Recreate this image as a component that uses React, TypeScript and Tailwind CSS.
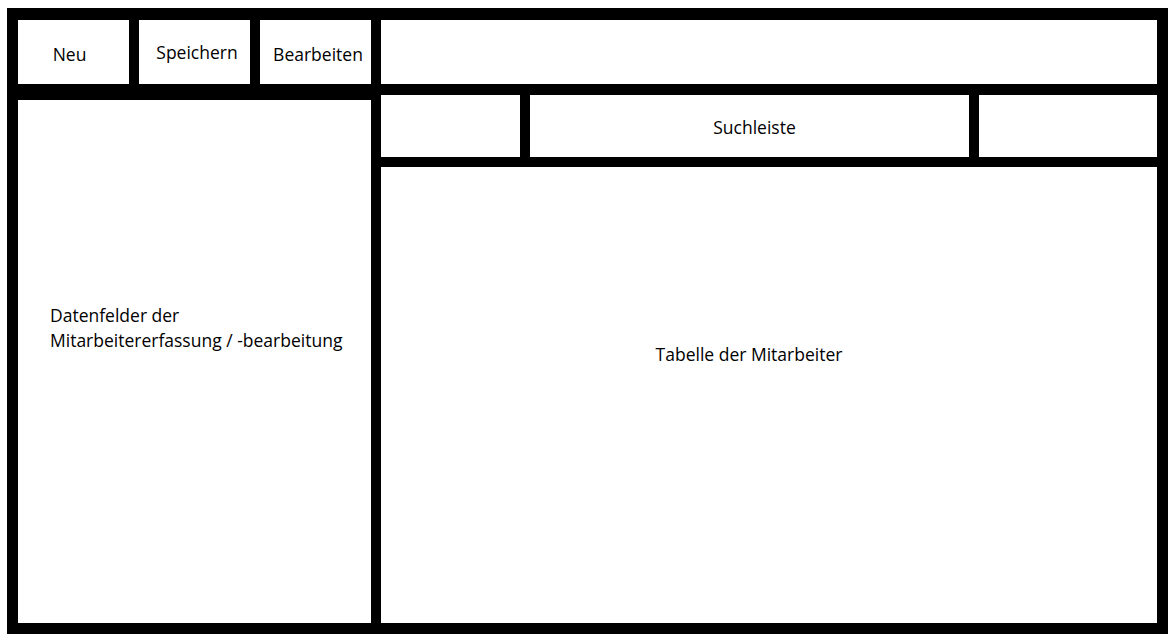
export default function App() {
  return (
    <div
      className="w-[1176px] h-[642px] bg-white pt-[8px] pl-[7px] text-black text-[17.5px]"
      style={{ fontFamily: '"Open Sans", "Noto Sans", sans-serif' }}
    >
      <div className="w-[1161px] h-[626px] bg-black pt-[12px] pl-[11px] pr-[11px] pb-[11px] flex gap-[10px]">
        {/* linke Spalte */}
        <div className="w-[353px] flex flex-col">
          <div className="h-[64px] flex gap-[10px]">
            <div className="w-[111px] bg-white flex items-center justify-center pt-[5px] pr-[8px]">Neu</div>
            <div className="w-[111px] bg-white flex items-center justify-center pl-[5px]">Speichern</div>
            <div className="w-[111px] bg-white flex items-center justify-center pt-[5px] pl-[5px]">Bearbeiten</div>
          </div>
          <div className="mt-[16px] flex-1 bg-white pl-[32px] pt-[203px] leading-[25px]">
            Datenfelder der
            <br />
            Mitarbeitererfassung / -bearbeitung
          </div>
        </div>

        {/* rechte Spalte */}
        <div className="flex-1 flex flex-col">
          <div className="h-[64px] bg-white" />
          <div className="mt-[11px] h-[62px] flex gap-[10px]">
            <div className="w-[139px] bg-white" />
            <div className="w-[439px] bg-white flex items-center justify-center pt-[3px] pl-[10px]">Suchleiste</div>
            <div className="flex-1 bg-white" />
          </div>
          <div className="mt-[10px] flex-1 bg-white flex justify-center pt-[174px] pr-[40px]">
            Tabelle der Mitarbeiter
          </div>
        </div>
      </div>
    </div>
  );
}
